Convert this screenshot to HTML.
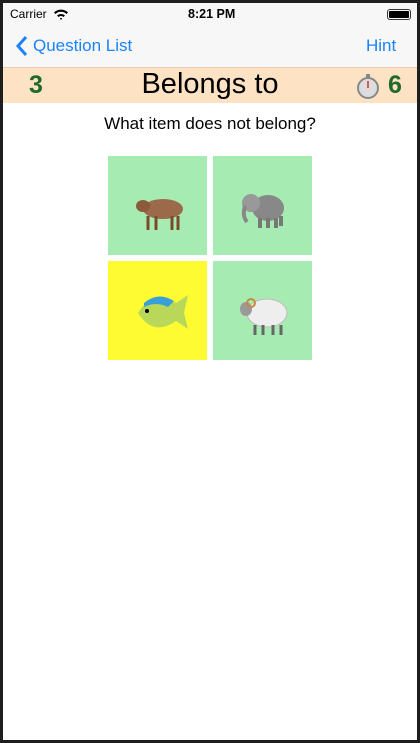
<!DOCTYPE html>
<html><head><style>
*{margin:0;padding:0;box-sizing:border-box}
body{width:420px;height:743px;background:#1e1e1e;font-family:"Liberation Sans",sans-serif;overflow:hidden;position:relative}
#s{position:absolute;left:3px;top:3px;width:414px;height:737px;background:#fff;overflow:hidden}
.nav{position:absolute;left:0;top:0;width:414px;height:64px;background:#f7f7f7}
.band{position:absolute;left:0;top:64px;width:414px;height:36px;background:#fde2c3;border-top:1px solid #e6cdb2}
.t{position:absolute;white-space:nowrap}
.tile{position:absolute;width:99px;height:99px;background:#a6ecb2}
</style></head><body><div id="s">
<div class="nav">
<div class="t" style="left:7px;top:4px;font-size:12px">Carrier</div>
<svg class="t" style="left:50px;top:5px" width="16" height="12" viewBox="0 0 16 12"><path d="M1 4.5A10 10 0 0 1 15 4.5L13.5 6A8 8 0 0 0 2.5 6Z M4 7.5A6 6 0 0 1 12 7.5L10.5 9A4 4 0 0 0 5.5 9Z M8 12L6.8 10.5A2 2 0 0 1 9.2 10.5Z" fill="#000"/></svg>
<div class="t" style="left:185px;top:4px;font-size:12.5px;font-weight:bold">8:21 PM</div>
<div class="t" style="left:384px;top:6px;width:24px;height:11px;border:1px solid #333;border-radius:3px;padding:1px"><div style="width:100%;height:100%;background:#000;border-radius:1px"></div></div>
<svg class="t" style="left:12px;top:32px" width="14" height="22" viewBox="0 0 14 22"><path d="M11 2L3 11L11 20" stroke="#1a82fb" stroke-width="3" fill="none"/></svg>
<div class="t" style="left:30px;top:33px;font-size:17px;color:#1a82fb">Question List</div>
<div class="t" style="left:363px;top:33px;font-size:17px;color:#1a82fb">Hint</div>
</div>
<div class="band">
<div class="t" style="left:26px;top:3px;font-size:25px;font-weight:bold;color:#1f6a2b">3</div>
<div class="t" style="left:0;width:414px;text-align:center;top:0px;font-size:29px;color:#000">Belongs to</div>
<svg class="t" style="left:352px;top:5px" width="26" height="26" viewBox="0 0 26 26"><circle cx="13" cy="15" r="10" fill="#ddd" stroke="#888" stroke-width="2"/><rect x="11" y="1" width="4" height="4" fill="#888"/><path d="M13 15L13 8" stroke="#c33" stroke-width="1.5"/></svg>
<div class="t" style="left:385px;top:3px;font-size:25px;font-weight:bold;color:#1f6a2b">6</div>
</div>
<div class="t" style="left:0;width:414px;text-align:center;top:111px;font-size:17px">What item does not belong?</div>
<div class="tile" style="left:105px;top:153px"><svg width="99" height="99"><ellipse cx="55" cy="53" rx="20" ry="10" fill="#9a6a4a"/><ellipse cx="35" cy="50" rx="7" ry="6" fill="#8a5a3a"/><path d="M40 60v14M48 60v14M64 60v14M70 60v14" stroke="#7a4a2a" stroke-width="3"/></svg></div>
<div class="tile" style="left:210px;top:153px"><svg width="99" height="99"><ellipse cx="55" cy="52" rx="16" ry="13" fill="#888"/><circle cx="38" cy="47" r="9" fill="#999"/><path d="M32 50q-3 10 2 16" stroke="#888" stroke-width="4" fill="none"/><path d="M47 62v10M55 62v10M63 62v10M68 60v10" stroke="#777" stroke-width="4"/></svg></div>
<div class="tile" style="left:105px;top:258px;background:#fffb33"><svg width="99" height="99"><path d="M30 52Q45 28 68 42L80 34L76 52L80 68L68 60Q45 76 30 52Z" fill="#b9d85a"/><path d="M36 42Q50 30 66 40L60 46Q48 40 36 46Z" fill="#3aa0d8"/><circle cx="39" cy="50" r="2" fill="#000"/></svg></div>
<div class="tile" style="left:210px;top:258px"><svg width="99" height="99"><ellipse cx="54" cy="52" rx="20" ry="14" fill="#eee" stroke="#bbb"/><ellipse cx="33" cy="48" rx="6" ry="7" fill="#999"/><circle cx="38" cy="42" r="4" fill="none" stroke="#c88a3a" stroke-width="2"/><path d="M42 64v10M50 64v10M60 64v10M68 64v10" stroke="#666" stroke-width="3"/></svg></div>
</div></body></html>
